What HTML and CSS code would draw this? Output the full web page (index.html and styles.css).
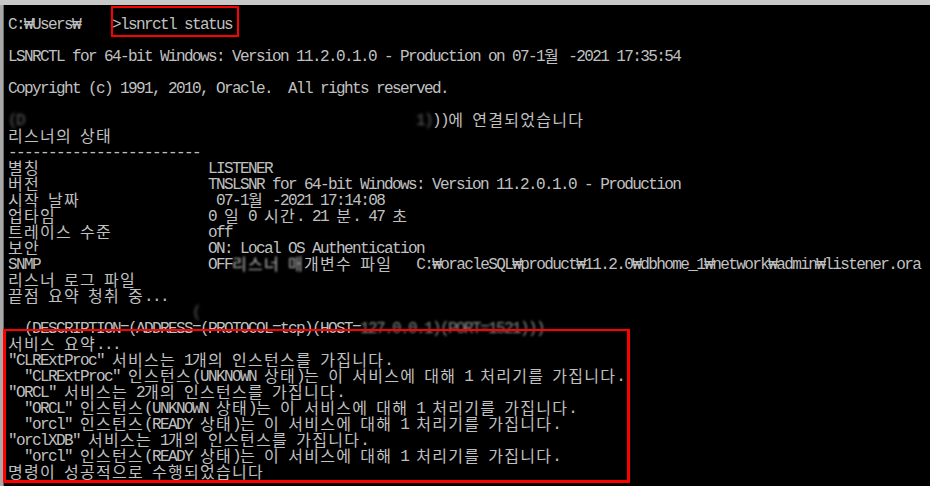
FILE: index.html
```
<!DOCTYPE html>
<html lang="ko">
<head>
<meta charset="utf-8">
<title>lsnrctl status</title>
<link rel="stylesheet" href="styles.css">
</head>
<body>
<div class="console">
  <div class="edge"></div>
  <div class="screen">
    <div class="ln">C:₩Users₩    &gt;lsnrctl status</div>
    <div class="ln"></div>
    <div class="ln">LSNRCTL for 64-bit Windows: Version 11.2.0.1.0 - Production on 07-1<span class="k">월</span> -2021 17:35:54</div>
    <div class="ln"></div>
    <div class="ln">Copyright (c) 1991, 2010, Oracle.  All rights reserved.</div>
    <div class="ln"></div>
    <div class="ln"><span class="smudge">(D</span>                                                 <span class="smudge">1)</span>))<span class="k">에</span> <span class="k">연결되었습니다</span></div>
    <div class="ln"><span class="k">리스너의</span> <span class="k">상태</span></div>
    <div class="ln">------------------------</div>
    <div class="ln"><span class="k">별칭</span>                     LISTENER</div>
    <div class="ln"><span class="k">버전</span>                     TNSLSNR for 64-bit Windows: Version 11.2.0.1.0 - Production</div>
    <div class="ln"><span class="k">시작</span> <span class="k">날짜</span>                 07-1<span class="k">월</span> -2021 17:14:08</div>
    <div class="ln"><span class="k">업타임</span>                   0 <span class="k">일</span> 0 <span class="k">시간</span>. 21 <span class="k">분</span>. 47 <span class="k">초</span></div>
    <div class="ln"><span class="k">트레이스</span> <span class="k">수준</span>            off</div>
    <div class="ln"><span class="k">보안</span>                     ON: Local OS Authentication</div>
    <div class="ln">SNMP                     OFF<span class="soft"><span class="k">리스너</span> <span class="k">매</span></span><span class="k">개변수</span> <span class="k">파일</span>   C:₩oracleSQL₩product₩11.2.0₩dbhome_1₩network₩admin₩listener.ora</div>
    <div class="ln"><span class="k">리스너</span> <span class="k">로그</span> <span class="k">파일</span></div>
    <div class="ln"><span class="k">끝점</span> <span class="k">요약</span> <span class="k">청취</span> <span class="k">중</span>...</div>
    <div class="ln">                       <span class="smudge">(</span></div>
    <div class="ln">  (DESCRIPTION=(ADDRESS=(PROTOCOL=tcp)(HOST=<span class="fog">127.0.0.1)(PORT=1521)))</span></div>
    <div class="ln"><span class="k">서비스</span> <span class="k">요약</span>...</div>
    <div class="ln">"CLRExtProc" <span class="k">서비스는</span> 1<span class="k">개의</span> <span class="k">인스턴스를</span> <span class="k">가집니다</span>.</div>
    <div class="ln">  "CLRExtProc" <span class="k">인스턴스</span>(UNKNOWN <span class="k">상태</span>)<span class="k">는</span> <span class="k">이</span> <span class="k">서비스에</span> <span class="k">대해</span> 1 <span class="k">처리기를</span> <span class="k">가집니다</span>.</div>
    <div class="ln">"ORCL" <span class="k">서비스는</span> 2<span class="k">개의</span> <span class="k">인스턴스를</span> <span class="k">가집니다</span>.</div>
    <div class="ln">  "ORCL" <span class="k">인스턴스</span>(UNKNOWN <span class="k">상태</span>)<span class="k">는</span> <span class="k">이</span> <span class="k">서비스에</span> <span class="k">대해</span> 1 <span class="k">처리기를</span> <span class="k">가집니다</span>.</div>
    <div class="ln">  "orcl" <span class="k">인스턴스</span>(READY <span class="k">상태</span>)<span class="k">는</span> <span class="k">이</span> <span class="k">서비스에</span> <span class="k">대해</span> 1 <span class="k">처리기를</span> <span class="k">가집니다</span>.</div>
    <div class="ln">"orclXDB" <span class="k">서비스는</span> 1<span class="k">개의</span> <span class="k">인스턴스를</span> <span class="k">가집니다</span>.</div>
    <div class="ln">  "orcl" <span class="k">인스턴스</span>(READY <span class="k">상태</span>)<span class="k">는</span> <span class="k">이</span> <span class="k">서비스에</span> <span class="k">대해</span> 1 <span class="k">처리기를</span> <span class="k">가집니다</span>.</div>
    <div class="ln"><span class="k">명령이</span> <span class="k">성공적으로</span> <span class="k">수행되었습니다</span></div>
  </div>
</div>
<div class="mark mark-cmd"></div>
<div class="mark mark-summary"></div>
</body>
</html>
```
FILE: styles.css
```
html, body {
  margin: 0;
  padding: 0;
  background: #000;
}
body {
  width: 930px;
  height: 486px;
  overflow: hidden;
  position: relative;
}
.console {
  display: flex;
  height: 486px;
  box-sizing: border-box;
  border-top: 5px solid #c8c8c8;
}
.edge {
  flex: none;
  width: 4px;
  background: #a8a8a8;
  border-right: 1px solid #6a6a6a;
  box-sizing: border-box;
}
.screen {
  flex: 1;
  padding: 12px 0 0 4px;
  font-family: "Liberation Mono", "DejaVu Sans Mono", monospace;
  font-size: 16px;
  letter-spacing: -1.6px;
  color: #c0c0c0;
}
.ln {
  height: 16px;
  line-height: 16px;
  white-space: pre;
}
.k {
  font-family: "Noto Sans CJK KR", "Noto Sans CJK SC", sans-serif;
  font-size: 16px;
  letter-spacing: 1.28px;
  line-height: 0;
  vertical-align: -1px;
}
.smudge {
  display: inline-block;
  color: #606060;
  filter: blur(1.8px);
}
.fog {
  display: inline-block;
  color: #8a8a8a;
  filter: blur(1.1px);
}
.soft {
  display: inline-block;
  filter: blur(0.9px);
}
.mark {
  position: absolute;
  border: 2px solid #ff0000;
}
.mark-cmd {
  left: 111px;
  top: 6px;
  width: 124px;
  height: 27px;
}
.mark-summary {
  left: 3px;
  top: 329px;
  width: 621px;
  height: 149px;
  border-width: 2px 3px 3px 3px;
}
```
